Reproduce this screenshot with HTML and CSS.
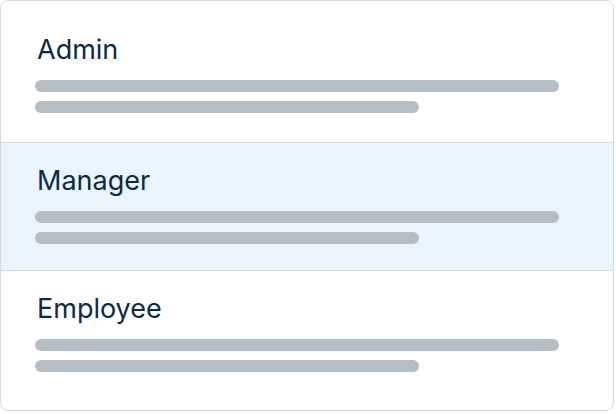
FILE: index.html
```html
<!DOCTYPE html>
<html lang="en">
<head>
<meta charset="utf-8">
<title>Roles</title>
<link rel="stylesheet" href="styles.css">
</head>
<body>
<div class="card">
  <div class="row row-first">
    <div class="title">Admin</div>
    <div class="bar bar-long"></div>
    <div class="bar bar-short"></div>
  </div>
  <div class="row row-active">
    <div class="title">Manager</div>
    <div class="bar bar-long"></div>
    <div class="bar bar-short"></div>
  </div>
  <div class="row">
    <div class="title">Employee</div>
    <div class="bar bar-long"></div>
    <div class="bar bar-short"></div>
  </div>
</div>
</body>
</html>
```
FILE: styles.css
```css
html, body {
  margin: 0;
  padding: 0;
  background: #ffffff;
}

.card {
  box-sizing: border-box;
  width: 614px;
  border: 1px solid #d6dbdc;
  border-radius: 8px;
  overflow: hidden;
  background: #ffffff;
  padding: 11px 0 12px;
  display: flex;
  flex-direction: column;
}

.row {
  padding: 23px 34px 26px;
  border-bottom: 1px solid #d6dbdc;
  display: flex;
  flex-direction: column;
}

.row:last-child {
  border-bottom: none;
}

.row-first {
  padding-bottom: 29px;
}

.row-active {
  background: #eaf4fd;
}

.title {
  font-family: Inter, "Liberation Sans", sans-serif;
  font-size: 27px;
  line-height: 30px;
  color: #0d2a45;
  padding-left: 2px;
  margin-bottom: 15px;
}

.bar {
  height: 12px;
  border-radius: 6px;
  background: #b5bdc5;
}

.bar-long {
  width: 524px;
  margin-bottom: 9px;
}

.bar-short {
  width: 384px;
}
```
